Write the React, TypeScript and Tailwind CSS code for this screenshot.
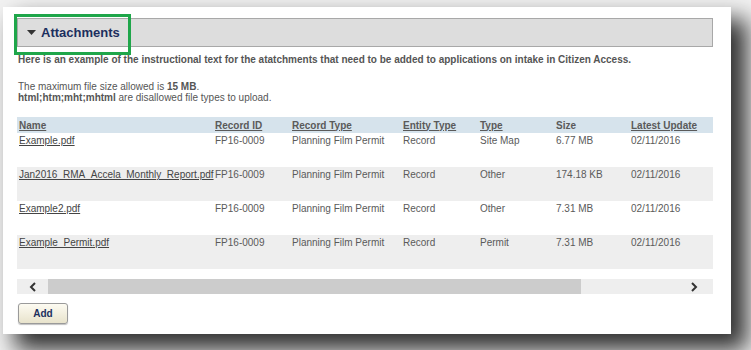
import React from "react";

const rows = [
  { name: "Example.pdf", id: "FP16-0009", recType: "Planning Film Permit", entity: "Record", type: "Site Map", size: "6.77 MB", updated: "02/11/2016" },
  { name: "Jan2016_RMA_Accela_Monthly_Report.pdf", id: "FP16-0009", recType: "Planning Film Permit", entity: "Record", type: "Other", size: "174.18 KB", updated: "02/11/2016" },
  { name: "Example2.pdf", id: "FP16-0009", recType: "Planning Film Permit", entity: "Record", type: "Other", size: "7.31 MB", updated: "02/11/2016" },
  { name: "Example_Permit.pdf", id: "FP16-0009", recType: "Planning Film Permit", entity: "Record", type: "Permit", size: "7.31 MB", updated: "02/11/2016" }
];

// Size is the only column header that isn't a sort link
const headers = [
  { label: "Name", link: true },
  { label: "Record ID", link: true },
  { label: "Record Type", link: true },
  { label: "Entity Type", link: true },
  { label: "Type", link: true },
  { label: "Size", link: false },
  { label: "Latest Update", link: true }
];

function Chevron({ dir }: { dir: "left" | "right" }) {
  return (
    <svg width="8" height="10" viewBox="0 0 8 10" className="block">
      <path
        d={dir === "left" ? "M6 1 L2 5 L6 9" : "M2 1 L6 5 L2 9"}
        fill="none"
        stroke="#333"
        strokeWidth="2"
      />
    </svg>
  );
}

export default function App() {
  return (
    <div className="h-[350px] w-[751px] overflow-hidden bg-[#f2f2f2] pl-[3px] pt-[7px] font-['Liberation_Sans',Arial,sans-serif]">
      <div className="relative h-[327px] w-[728px] bg-white pl-[14px] pr-[18px] pt-[11px] shadow-[14px_14px_22px_2px_rgba(0,0,0,0.8)]">
        {/* green highlight */}
        <div className="absolute left-[11px] top-[7px] h-[41px] w-[117px] border-[3px] border-[#1fa64a]" />

        <div className="flex h-[29px] items-center border border-[#a8a8a8] bg-[#dddddd] pl-[9px]">
          <svg width="9" height="5" viewBox="0 0 9 5" className="mr-[5px]">
            <path d="M0 0 L9 0 L4.5 5 Z" fill="#333" />
          </svg>
          <span className="text-[13px] font-bold text-[#1c2f5e]">Attachments</span>
        </div>

        <p className="mt-[7px] pl-[1px] text-[10px] leading-[12px] font-bold text-[#555]">
          Here is an example of the instructional text for the atatchments that need to be added to applications on intake in Citizen Access.
        </p>

        <div className="mt-[15px] pl-[1px] text-[10px] leading-[11px] text-[#555]">
          <div>
            The maximum file size allowed is <b>15 MB</b>.
          </div>
          <div>
            <b>html;htm;mht;mhtml</b> are disallowed file types to upload.
          </div>
        </div>

        <div className="mt-[14px] w-[696px] overflow-hidden">
          <table className="w-[696px] table-fixed border-collapse text-[10px] text-[#5a5a5a]">
            <colgroup>
              <col className="w-[196px]" />
              <col className="w-[77px]" />
              <col className="w-[111px]" />
              <col className="w-[77px]" />
              <col className="w-[76px]" />
              <col className="w-[75px]" />
              <col className="w-[84px]" />
            </colgroup>
            <thead>
              <tr className="h-[16px] bg-[#d6e3ec]">
                {headers.map((h) => (
                  <th key={h.label} className="px-[2px] text-left align-middle font-bold">
                    <span className={h.link ? "underline" : ""}>{h.label}</span>
                  </th>
                ))}
              </tr>
            </thead>
            <tbody>
              {rows.map((r, i) => (
                <tr key={r.name} className={i % 2 === 1 ? "h-[34px] bg-[#eeeeee]" : "h-[34px] bg-white"}>
                  <td className="whitespace-nowrap px-[2px] align-top">
                    <a className="text-[#444] underline">{r.name}</a>
                  </td>
                  <td className="px-[2px] align-top">{r.id}</td>
                  <td className="whitespace-nowrap px-[2px] align-top">{r.recType}</td>
                  <td className="px-[2px] align-top">{r.entity}</td>
                  <td className="px-[2px] align-top">{r.type}</td>
                  <td className="px-[2px] align-top">{r.size}</td>
                  <td className="px-[2px] align-top">{r.updated}</td>
                </tr>
              ))}
            </tbody>
          </table>
        </div>

        {/* horizontal scrollbar */}
        <div className="mt-[10px] flex h-[15px] w-[696px] bg-[#eeeeee]">
          <div className="flex w-[31px] items-center justify-center">
            <Chevron dir="left" />
          </div>
          <div className="w-[533px] bg-[#cccccc]" />
          <div className="flex flex-1 items-center justify-end pr-[15px]">
            <Chevron dir="right" />
          </div>
        </div>

        <button className="mt-[9px] ml-[1px] h-[21px] w-[50px] rounded-[3px] border border-[#9a9a9a] bg-gradient-to-b from-[#fdfbf2] to-[#e8e3cc] text-[10px] font-bold text-[#1c2f5e] shadow-[0_1px_1px_rgba(0,0,0,0.25)]">
          Add
        </button>
      </div>
    </div>
  );
}
